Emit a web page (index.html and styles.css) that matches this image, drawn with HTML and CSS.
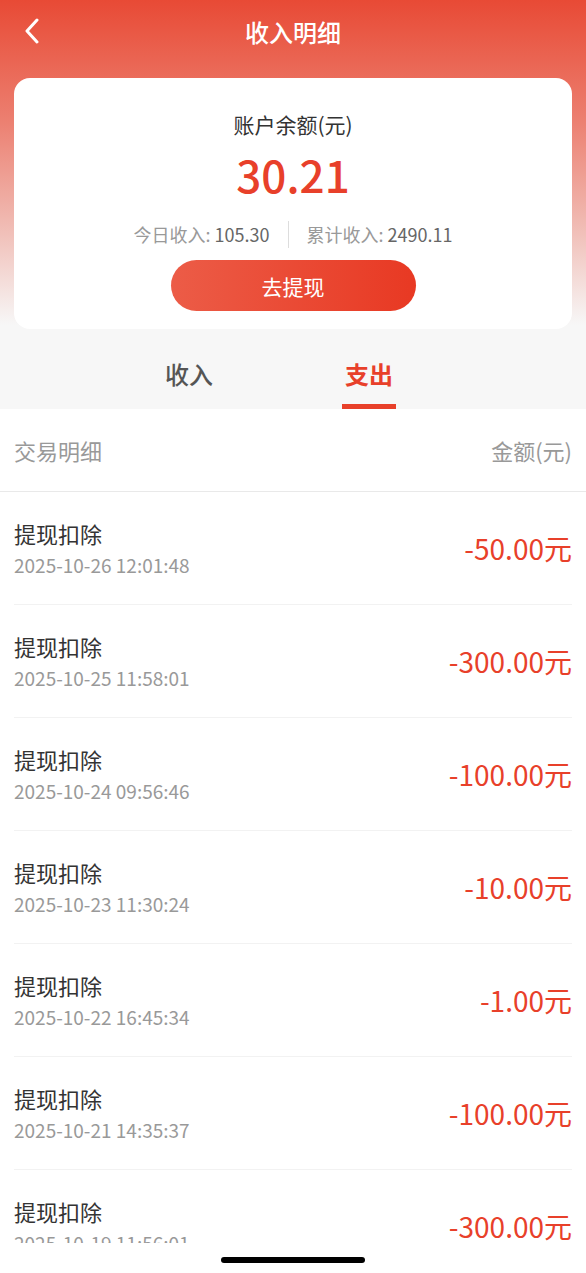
FILE: index.html
```html
<!DOCTYPE html>
<html lang="zh-CN">
<head>
<meta charset="UTF-8">
<meta name="viewport" content="width=device-width, initial-scale=1.0">
<link rel="stylesheet" href="styles.css">
<title>收入明细</title>
</head>
<body>
  <div class="page">
    <div class="top">
      <div class="nav">
        <span class="back">
          <svg width="16" height="26" viewBox="0 0 16 26"><path d="M13 2 L3 13 L13 24" fill="none" stroke="#fff" stroke-width="3" stroke-linecap="round" stroke-linejoin="round"/></svg>
        </span>
        <h1 class="title">收入明细</h1>
      </div>

      <div class="card">
        <div class="card-label">账户余额(元)</div>
        <div class="card-amount">30.21</div>
        <div class="stats">
          <span class="stat">今日收入: <b>105.30</b></span>
          <span class="divider"></span>
          <span class="stat">累计收入: <b>2490.11</b></span>
        </div>
        <button type="button" class="btn">去提现</button>
      </div>

      <div class="tabs">
        <div class="tab">收入</div>
        <div class="tab active">支出</div>
      </div>
    </div>

    <div class="list-head">
      <span>交易明细</span>
      <span>金额(元)</span>
    </div>

    <div class="list" id="list"></div>

    <div class="home"><span class="indicator"></span></div>
  </div>

  <script>
    const registros = [
      ['2025-10-26 12:01:48', '-50.00'],
      ['2025-10-25 11:58:01', '-300.00'],
      ['2025-10-24 09:56:46', '-100.00'],
      ['2025-10-23 11:30:24', '-10.00'],
      ['2025-10-22 16:45:34', '-1.00'],
      ['2025-10-21 14:35:37', '-100.00'],
      ['2025-10-19 11:56:01', '-300.00']
    ];

    const list = document.getElementById('list');
    registros.forEach(r => {
      const row = document.createElement('div');
      row.className = 'row';
      row.innerHTML = `
        <div class="row-info">
          <div class="row-title">提现扣除</div>
          <div class="row-date">${r[0]}</div>
        </div>
        <div class="row-amount">${r[1]}元</div>
      `;
      list.appendChild(row);
    });
  </script>
</body>
</html>
```

FILE: styles.css
```css
body {
  margin: 0;
  font-family: "Noto Sans CJK SC", "Noto Sans", sans-serif;
  background-color: #fff;
  color: #333;
}

.page {
  width: 586px;
  height: 1273px;
  display: flex;
  flex-direction: column;
  overflow: hidden;
}

.top {
  background: linear-gradient(180deg, #e84a35 0px, #ec7f70 120px, #f0b8b0 220px, #f7f7f7 325px);
}

.nav {
  height: 64px;
  display: flex;
  align-items: center;
  justify-content: center;
  position: relative;
}

.back {
  position: absolute;
  left: 24px;
  top: 18px;
  display: flex;
}

.title {
  margin: 0;
  color: #fff;
  font-size: 24px;
  font-weight: 500;
  line-height: 1;
}

.card {
  margin: 14px 14px 0;
  height: 251px;
  box-sizing: border-box;
  padding-top: 32px;
  background-color: #fff;
  border-radius: 16px;
  display: flex;
  flex-direction: column;
  align-items: center;
}

.card-label {
  font-size: 21px;
  line-height: 28px;
  color: #333;
}

.card-amount {
  margin-top: 10px;
  font-size: 44px;
  font-weight: 500;
  line-height: 52px;
  color: #e8402a;
}

.stats {
  margin-top: 21px;
  display: flex;
  align-items: center;
  gap: 18px;
  font-size: 18px;
  line-height: 27px;
  color: #999;
}

.stat b {
  font-weight: 400;
  color: #666;
}

.divider {
  width: 1px;
  height: 27px;
  background-color: #ddd;
}

.btn {
  margin-top: 12px;
  width: 245px;
  height: 51px;
  border: none;
  border-radius: 26px;
  background: linear-gradient(90deg, #ec5c47, #e83923);
  color: #fff;
  font-family: inherit;
  font-size: 21px;
  cursor: pointer;
}

.tabs {
  height: 80px;
  display: flex;
  padding-left: 129px;
  gap: 60px;
}

.tab {
  width: 120px;
  display: flex;
  align-items: center;
  justify-content: center;
  font-size: 24px;
  font-weight: 500;
  color: #555;
  position: relative;
  padding-top: 8px;
}

.tab.active {
  color: #e8402a;
  font-weight: 700;
}

.tab.active::after {
  content: "";
  position: absolute;
  bottom: 0;
  left: 33px;
  width: 54px;
  height: 5px;
  background-color: #e8402a;
}

.list-head {
  height: 82px;
  padding: 0 14px;
  display: flex;
  align-items: center;
  justify-content: space-between;
  border-bottom: 1px solid #e9e9e9;
  font-size: 22px;
  color: #999;
}

.list {
  flex: 1;
  overflow: hidden;
}

.row {
  height: 112px;
  margin: 0 14px;
  display: flex;
  align-items: center;
  justify-content: space-between;
  border-bottom: 1px solid #f2f2f2;
}

.row-title {
  font-size: 22px;
  line-height: 30px;
  color: #333;
}

.row-date {
  margin-top: 4px;
  font-size: 19px;
  line-height: 26px;
  color: #999;
}

.row-amount {
  font-size: 28px;
  color: #e8402a;
}

.home {
  height: 30px;
  display: flex;
  justify-content: center;
  padding-top: 14px;
  box-sizing: border-box;
}

.indicator {
  width: 144px;
  height: 6px;
  border-radius: 3px;
  background-color: #000;
}
```
